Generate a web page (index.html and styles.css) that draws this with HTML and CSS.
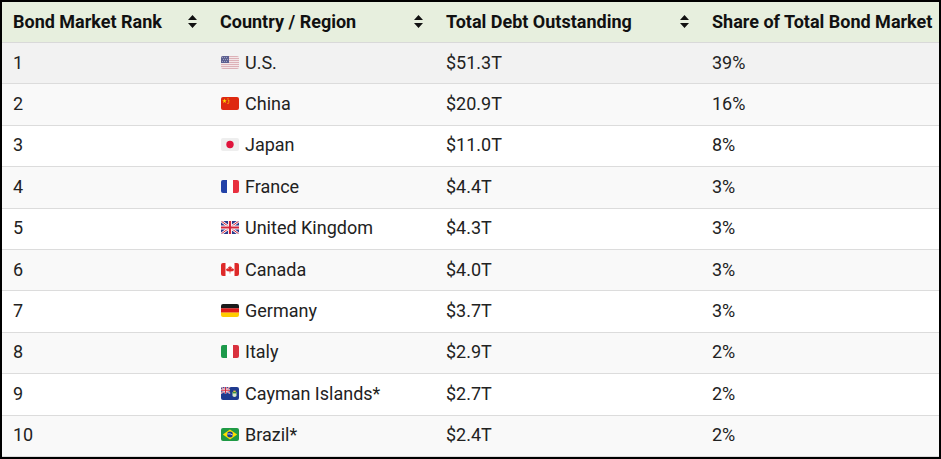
FILE: index.html
```html
<!DOCTYPE html>
<html lang="en">
<head>
<meta charset="utf-8">
<title>Bond Market Rank</title>
<link rel="stylesheet" href="styles.css">
</head>
<body>
<div class="frame">
<table class="bonds">
<colgroup><col class="c1"><col class="c2"><col class="c3"><col class="c4"></colgroup>
<thead>
<tr>
<th><div class="hcell"><span>Bond Market Rank</span><svg class="sort" viewBox="0 0 9 13"><path d="M4.5 0 L9 5 H0 Z M0 8 H9 L4.5 13 Z"/></svg></div></th>
<th><div class="hcell"><span>Country / Region</span><svg class="sort" viewBox="0 0 9 13"><path d="M4.5 0 L9 5 H0 Z M0 8 H9 L4.5 13 Z"/></svg></div></th>
<th><div class="hcell"><span>Total Debt Outstanding</span><svg class="sort" viewBox="0 0 9 13"><path d="M4.5 0 L9 5 H0 Z M0 8 H9 L4.5 13 Z"/></svg></div></th>
<th><div class="hcell"><span>Share of Total Bond Market</span></div></th>
</tr>
</thead>
<tbody>
<tr class="hover"><td>1</td><td><div class="country"><svg class="flag" viewBox="0 0 18 13"><rect width="18" height="13" fill="#f3e6e8"/><g fill="#dcb1b7"><rect y="0" width="18" height="1"/><rect y="2" width="18" height="1"/><rect y="4" width="18" height="1"/><rect y="6" width="18" height="1"/><rect y="8" width="18" height="1"/><rect y="10" width="18" height="1"/><rect y="12" width="18" height="1"/></g><rect width="8" height="7" fill="#5d6090"/><g fill="#9ea0c0"><rect x="1" y="1" width="1" height="1"/><rect x="3" y="1" width="1" height="1"/><rect x="5" y="1" width="1" height="1"/><rect x="2" y="3" width="1" height="1"/><rect x="4" y="3" width="1" height="1"/><rect x="6" y="3" width="1" height="1"/><rect x="1" y="5" width="1" height="1"/><rect x="3" y="5" width="1" height="1"/><rect x="5" y="5" width="1" height="1"/></g></svg><span>U.S.</span></div></td><td>$51.3T</td><td>39%</td></tr>
<tr><td>2</td><td><div class="country"><svg class="flag" viewBox="0 0 18 13"><rect width="18" height="13" fill="#de2910"/><polygon points="3.5,1.5 4.1,3.2 5.8,3.2 4.4,4.2 5,5.9 3.5,4.9 2,5.9 2.6,4.2 1.2,3.2 2.9,3.2" fill="#ffde00"/><circle cx="7" cy="1.8" r="0.6" fill="#ffde00"/><circle cx="7.8" cy="3.3" r="0.6" fill="#ffde00"/><circle cx="7.8" cy="4.9" r="0.6" fill="#ffde00"/><circle cx="7" cy="6.3" r="0.6" fill="#ffde00"/></svg><span>China</span></div></td><td>$20.9T</td><td>16%</td></tr>
<tr><td>3</td><td><div class="country"><svg class="flag" viewBox="0 0 18 13"><rect width="18" height="13" fill="#eeeeee"/><circle cx="9" cy="6.5" r="3.7" fill="#e0143c"/></svg><span>Japan</span></div></td><td>$11.0T</td><td>8%</td></tr>
<tr><td>4</td><td><div class="country"><svg class="flag" viewBox="0 0 18 13"><rect width="6" height="13" fill="#2342a8"/><rect x="6" width="6" height="13" fill="#ffffff"/><rect x="12" width="6" height="13" fill="#e8303f"/></svg><span>France</span></div></td><td>$4.4T</td><td>3%</td></tr>
<tr><td>5</td><td><div class="country"><svg class="flag" viewBox="0 0 18 13"><rect width="18" height="13" fill="#2b3a8c"/><path d="M0 0 L18 13 M18 0 L0 13" stroke="#fff" stroke-width="2.6"/><path d="M0 0 L18 13 M18 0 L0 13" stroke="#d4263c" stroke-width="1"/><path d="M9 0 V13 M0 6.5 H18" stroke="#fff" stroke-width="4"/><path d="M9 0 V13 M0 6.5 H18" stroke="#d4263c" stroke-width="2.2"/></svg><span>United Kingdom</span></div></td><td>$4.3T</td><td>3%</td></tr>
<tr><td>6</td><td><div class="country"><svg class="flag" viewBox="0 0 18 13"><rect width="18" height="13" fill="#ffffff"/><rect width="4.5" height="13" fill="#de2a2a"/><rect x="13.5" width="4.5" height="13" fill="#de2a2a"/><path d="M9 2.6 L9.8 4.2 L10.9 3.7 L10.5 6.3 L12 5.1 L12.3 6 L13.1 5.9 L12.4 7.6 L12.8 8 L9.3 8.6 L9.3 10.4 H8.7 L8.7 8.6 L5.2 8 L5.6 7.6 L4.9 5.9 L5.7 6 L6 5.1 L7.5 6.3 L7.1 3.7 L8.2 4.2 Z" fill="#de2a2a"/></svg><span>Canada</span></div></td><td>$4.0T</td><td>3%</td></tr>
<tr><td>7</td><td><div class="country"><svg class="flag" viewBox="0 0 18 13"><rect width="18" height="4.4" fill="#1a1a1a"/><rect y="4.3" width="18" height="4.4" fill="#dd1c1c"/><rect y="8.6" width="18" height="4.4" fill="#ffcc00"/></svg><span>Germany</span></div></td><td>$3.7T</td><td>3%</td></tr>
<tr><td>8</td><td><div class="country"><svg class="flag" viewBox="0 0 18 13"><rect width="6" height="13" fill="#1d9a4b"/><rect x="6" width="6" height="13" fill="#ffffff"/><rect x="12" width="6" height="13" fill="#d9323f"/></svg><span>Italy</span></div></td><td>$2.9T</td><td>2%</td></tr>
<tr><td>9</td><td><div class="country"><svg class="flag" viewBox="0 0 18 13"><rect width="18" height="13" fill="#1f3a8f"/><rect width="9" height="6.5" fill="#2b3a8c"/><path d="M0 0 L9 6.5 M9 0 L0 6.5" stroke="#fff" stroke-width="1.4"/><path d="M0 0 L9 6.5 M9 0 L0 6.5" stroke="#d4263c" stroke-width="0.6"/><path d="M4.5 0 V6.5 M0 3.25 H9" stroke="#fff" stroke-width="2"/><path d="M4.5 0 V6.5 M0 3.25 H9" stroke="#d4263c" stroke-width="1.1"/><path d="M11.5 5 H15.5 V9 Q13.5 11 11.5 9 Z" fill="#d8e6c8"/><rect x="11.5" y="5" width="4" height="1.4" fill="#3f8f3f"/><rect x="12.3" y="3.6" width="2.4" height="1.4" fill="#e8c040"/></svg><span>Cayman Islands*</span></div></td><td>$2.7T</td><td>2%</td></tr>
<tr><td>10</td><td><div class="country"><svg class="flag" viewBox="0 0 18 13"><rect width="18" height="13" fill="#1f9a45"/><polygon points="9,1.5 16.2,6.5 9,11.5 1.8,6.5" fill="#fedf00"/><circle cx="9" cy="6.5" r="2.9" fill="#1c3c8c"/><path d="M6.2 6 Q9 5.2 11.8 7" stroke="#fff" stroke-width="0.7" fill="none"/></svg><span>Brazil*</span></div></td><td>$2.4T</td><td>2%</td></tr>
</tbody>
</table>
</div>
</body>
</html>
```

FILE: styles.css
```css
html, body {
  margin: 0;
  padding: 0;
  background: #ffffff;
}

.frame {
  width: 941px;
  height: 459px;
  box-sizing: border-box;
  border: 2px solid #000000;
  overflow: hidden;
  background: #ffffff;
}

.bonds {
  width: 937px;
  border-collapse: collapse;
  table-layout: fixed;
  font-family: Roboto, "Liberation Sans", sans-serif;
  font-size: 18px;
  color: #222222;
}

.c1 { width: 207px; }
.c2 { width: 226px; }
.c3 { width: 266px; }
.c4 { width: 238px; }

.bonds th {
  background: #e7efde;
  height: 38px;
  padding: 0 12px 2px 11px;
  text-align: left;
  font-weight: 700;
  color: #111111;
  white-space: nowrap;
  border-bottom: 1px solid #d9d9d9;
  overflow: hidden;
}

.hcell {
  display: flex;
  align-items: center;
  justify-content: space-between;
}

.sort {
  width: 9px;
  height: 13px;
  fill: #111111;
  flex: none;
}

.bonds td {
  height: 38.4px;
  padding: 0 12px 2px 11px;
  border-bottom: 1px solid #dcdcdc;
  white-space: nowrap;
  vertical-align: middle;
}

.bonds tbody tr:nth-child(even) td {
  background: #f9f9f9;
}

.bonds tbody tr.hover td {
  background: #f2f2f2;
}

.country {
  display: flex;
  align-items: center;
  gap: 6px;
}

.flag {
  width: 18px;
  height: 13px;
  border-radius: 2px;
  flex: none;
  margin-left: 1px;
}
```
